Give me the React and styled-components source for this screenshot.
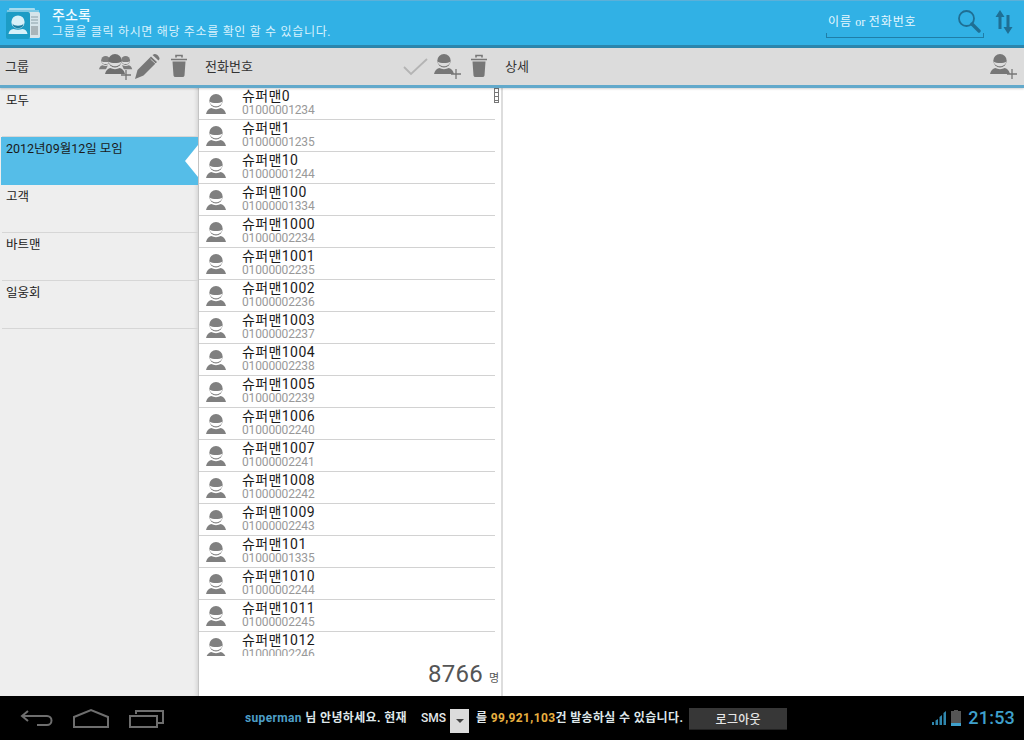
import React from 'react';
import styled, { createGlobalStyle } from 'styled-components';

const Global = createGlobalStyle`
  html, body { margin: 0; padding: 0; background: #fff; }
  body { font-family: Roboto, "Noto Sans CJK KR", sans-serif; }
  * { box-sizing: border-box; }
`;

const Screen = styled.div`
  width: 1024px; height: 740px; display: flex; flex-direction: column; overflow: hidden;
`;
const Header = styled.header`
  height: 48px; flex: none; display: flex; align-items: center;
  background: #31b1e5; border-top: 1px solid #5cb0d8; border-bottom: 3px solid #2b86ad;
  padding-left: 6px; color: #fff;
`;
const AppIcon = styled.svg`width: 34px; height: 31px; flex: none; margin-right: 12px; margin-top: 1px;`;
const TitleBlock = styled.div`display: flex; flex-direction: column; flex: 1; margin-top: -1px;`;
const Title = styled.div`font-size: 14px; line-height: 18px; font-weight: 500; color: #f2fbff; letter-spacing: 0.1px;`;
const Subtitle = styled.div`font-size: 12px; line-height: 16px; color: #d8f2fd; letter-spacing: 0.68px;`;
const SearchBox = styled.div`
  width: 158px; height: 28px; margin-top: 1px; display: flex; align-items: center; justify-content: space-between;
  border-bottom: 1px solid #1f7ea8; position: relative; flex: none; padding: 0 3px 0 2px;
  &::before, &::after { content: ''; position: absolute; bottom: 0; width: 1px; height: 4px; background: #1f7ea8; }
  &::before { left: 0; }
  &::after { right: 0; }
`;
const SearchText = styled.span`
  font-size: 12px; line-height: 16px; color: #e6f8ff; white-space: nowrap; margin-top: -4px;
  font-family: "Noto Sans CJK KR", sans-serif; letter-spacing: 0.85px;
`;
const SearchOr = styled.span`font-family: "Liberation Serif", serif; font-size: 12px; letter-spacing: 0;`;
const SearchIcon = styled.svg`width: 24px; height: 24px; flex: none; margin-top: -4px;`;
const SortIcon = styled.svg`width: 18px; height: 26px; flex: none; margin: -2px 11px 0 11px;`;

const Toolbar = styled.div`
  height: 40px; flex: none; display: flex; align-items: stretch; background: #dcdcdc;
  border-bottom: 3px solid #62a9cb; box-shadow: 0 1px 2px rgba(0,0,0,.18); position: relative; z-index: 2;
`;
const ToolSection = styled.div`
  width: ${p => p.$w}px; flex: ${p => p.$grow ? 1 : 'none'}; display: flex; align-items: center;
  padding-left: ${p => p.$pad}px; padding-right: ${p => p.$end}px;
`;
const ToolLabel = styled.span`font-size: 13px; line-height: 16px; color: #333; flex: 1;`;
const ToolIcon = styled.svg`flex: none; display: block; margin-left: ${p => p.$ml || 0}px;`;

const Body = styled.div`flex: 1; display: flex; min-height: 0;`;
const Groups = styled.nav`
  width: 198px; flex: none; background: #eeeeee; padding-top: 1px; box-shadow: inset -4px 0 4px -3px rgba(0,0,0,.13);
`;
const GroupRow = styled.div`
  height: 48px; padding: 3px 6px; font-size: 12.5px; line-height: 18px; color: ${p => p.$sel ? '#1a1a1a' : '#222'};
  background: ${p => p.$sel ? '#55bde8' : 'transparent'}; position: relative;
  border-bottom: 1px solid ${p => p.$sel ? 'transparent' : '#d6d6d6'};
  margin-left: ${p => p.$sel ? 1 : 2}px;
  padding-left: ${p => p.$sel ? 5 : 4}px;
`;
const GroupArrow = styled.span`
  position: absolute; right: 0; top: 8px; width: 0; height: 0;
  border-top: 16px solid transparent; border-bottom: 16px solid transparent; border-right: 13px solid #fff;
`;
const ListPane = styled.section`
  width: 305px; flex: none; background: #fff; border-left: 1px solid #c4c4c4; border-right: 2px solid #dddddd;
  display: flex; flex-direction: column; position: relative;
`;
const ListScroll = styled.div`height: 568px; overflow: hidden; flex: none;`;
const ContactRow = styled.div`
  height: 32px; display: flex; width: 296px; border-bottom: 1px solid #d2d2d2;
`;
const Avatar = styled.svg`width: 20px; height: 20px; margin: 6px 0 0 7px; flex: none;`;
const ContactText = styled.div`margin-left: 16px; display: flex; flex-direction: column;`;
const Name = styled.div`font-size: 14px; line-height: 15px; color: #1a1a1a; margin-top: 1px; white-space: nowrap; letter-spacing: 0.4px;`;
const Phone = styled.div`font-size: 12px; line-height: 13px; color: #999; white-space: nowrap; letter-spacing: -0.15px;`;
const Grip = styled.div`
  position: absolute; top: 0; right: 2px; width: 5px; height: 15px; border: 1px solid #777; background:
  repeating-linear-gradient(#fff 0 3px, #777 3px 4px);
`;
const Count = styled.div`
  flex: 1; display: flex; justify-content: flex-end; align-items: baseline; padding: 4px 2px 0 0; color: #555;
`;
const CountNum = styled.span`font-size: 24px; line-height: 28px; letter-spacing: 0.2px;`;
const CountUnit = styled.span`font-size: 11px; margin-left: 6px;`;
const Detail = styled.section`flex: 1; background: #fff;`;

const NavBar = styled.footer`
  height: 44px; flex: none; background: #000; display: flex; align-items: center; color: #dfe7ea;
`;
const NavIcons = styled.div`display: flex; align-items: center; gap: 19px; width: 245px; padding-left: 20px; flex: none; margin-top: -1px;`;
const Msg = styled.span`font-size: 12px; font-weight: 700; white-space: nowrap; line-height: 16px; letter-spacing: 0.36px;`;
const User = styled.span`color: #4d9fc7;`;
const SmsLabel = styled.span`font-size: 12px; font-weight: 500; margin-left: 14px; color: #e4e8ea; line-height: 16px;`;
const Select = styled.span`
  width: 19px; height: 24px; background: #dcdcdc; margin: 5px 7px 0 4px; display: flex; align-items: center; justify-content: center; flex: none;
  &::after { content: ''; border-left: 4px solid transparent; border-right: 4px solid transparent; border-top: 4px solid #444; }
`;
const Amount = styled.span`color: #e8b040;`;
const Logout = styled.button`
  width: 98px; height: 22px; margin: 1px 0 0 6px; background: #373737; border: 0; border-bottom: 1px solid #222; color: #e6e6e6;
  font: 500 12px "Noto Sans CJK KR", sans-serif; padding: 0; letter-spacing: 0.3px;
`;
const Status = styled.div`margin-left: auto; display: flex; align-items: center; margin-right: 9px; gap: 4px;`;
const Clock = styled.span`font-size: 18px; font-weight: 500; color: #3fa0cc; margin-left: 3px; line-height: 20px; letter-spacing: 0.2px;`;

const Person = ({ bg = '#fff', fill = '#808080' }) => (
  <g>
    <circle cx="10" cy="6.800" r="6.700" fill={fill} />
    <path d="M3.700 7.800C6 9.500 14 9.500 16.300 7.800 15.800 10.600 13 12.300 10 12.300S4.200 10.600 3.700 7.800z" fill={bg} />
    <path d="M5.200 14c3 1.500 6.600 1.500 9.600 0 2.600.8 4.400 2.700 5.200 6H0c.8-3.300 2.600-5.200 5.200-6z" fill={fill} />
  </g>
);
const Plus = ({ x, y, s = 5 }) => (
  <path d={`M${x - s} ${y}h${s * 2}M${x} ${y - s}v${s * 2}`} stroke="#777" strokeWidth="1.3" fill="none" />
);
const PersonAdd = ({ ml }) => (
  <ToolIcon $ml={ml} width="28" height="26" viewBox="0 0 28 26">
    <Person bg="#dcdcdc" fill="#777" />
    <Plus x={22} y={20} />
  </ToolIcon>
);
const Trash = ({ ml }) => (
  <ToolIcon $ml={ml} width="18" height="26" viewBox="0 0 18 26">
    <path d="M6 3.500V1.500h6v2M1 5.500h16" stroke="#777" strokeWidth="1.600" fill="none" />
    <path d="M2.500 7.500h13l-1 14a2 2 0 0 1-2 1.500h-7a2 2 0 0 1-2-1.500z" fill="#777" />
  </ToolIcon>
);
const Pencil = ({ ml }) => (
  <ToolIcon $ml={ml} width="26" height="27" viewBox="0 0 26 27">
    <path d="M1 26l2.500-9L17 3.500l6 5.500L9.500 22.500z" fill="#777" />
    <path d="M18.500 2l6 5.500 1-1.500c.4-2-3-5.600-5-5z" fill="#777" />
    <path d="M16.500 6l5.500 5M19 4.500l3.500 3" stroke="#dcdcdc" strokeWidth=".8" />
  </ToolIcon>
);
const GroupAdd = ({ ml }) => (
  <ToolIcon $ml={ml} width="34" height="28" viewBox="0 0 34 28">
    <g transform="translate(0 3) scale(.66)"><Person bg="#dcdcdc" fill="#7d7d7d" /></g>
    <g transform="translate(20 3) scale(.66)"><Person bg="#dcdcdc" fill="#7d7d7d" /></g>
    <path d="M4.500 21.500L9 12h14l4 9.500z" fill="#dcdcdc" />
    <g transform="translate(6 1)"><Person bg="#dcdcdc" fill="#6f6f6f" /></g>
    <Plus x={27} y={22} />
  </ToolIcon>
);
const Check = ({ ml }) => (
  <ToolIcon $ml={ml} width="25" height="18" viewBox="0 0 25 18">
    <path d="M1 9l7 7L24 1" stroke="#b4b4b4" strokeWidth="1.800" fill="none" />
  </ToolIcon>
);

const contacts = [
  ['슈퍼맨0','01000001234'],['슈퍼맨1','01000001235'],['슈퍼맨10','01000001244'],['슈퍼맨100','01000001334'],
  ['슈퍼맨1000','01000002234'],['슈퍼맨1001','01000002235'],['슈퍼맨1002','01000002236'],['슈퍼맨1003','01000002237'],
  ['슈퍼맨1004','01000002238'],['슈퍼맨1005','01000002239'],['슈퍼맨1006','01000002240'],['슈퍼맨1007','01000002241'],
  ['슈퍼맨1008','01000002242'],['슈퍼맨1009','01000002243'],['슈퍼맨101','01000001335'],['슈퍼맨1010','01000002244'],
  ['슈퍼맨1011','01000002245'],['슈퍼맨1012','01000002246'],
];

export default function App() {
  return (
    <Screen>
      <Global />
      <Header>
        <AppIcon viewBox="0 0 34 31">
          <rect x="3" y="0" width="26" height="4" rx="1" fill="#a8dcef" />
          <rect x="1" y="2" width="32" height="3" fill="#7cc8e4" />
          <rect x="22" y="4" width="12" height="26" rx="1.500" fill="#d5e4ea" />
          <rect x="0" y="4" width="24" height="27" rx="2" fill="#1c9cc5" />
          <circle cx="12" cy="14" r="6.600" fill="#d8f1f9" />
          <path d="M6.400 15.500c1.600 3 9.600 3 11.200 0l-1 3a7 7 0 0 1-9.200 0z" fill="#1c7fa3" />
          <path d="M7.500 21c3 1 6 1 9 0 3 .6 4.500 2 5 5H2.500c.5-3 2-4.400 5-5z" fill="#d8f1f9" />
          <path d="M25 9h7M25 12h7M25 15h7" stroke="#8ba0a8" strokeWidth="1" />
          <rect x="25" y="18" width="7" height="9" fill="#a9b5ba" />
        </AppIcon>
        <TitleBlock>
          <Title>주소록</Title>
          <Subtitle>그룹을 클릭 하시면 해당 주소를 확인 할 수 있습니다.</Subtitle>
        </TitleBlock>
        <SearchBox>
          <SearchText>이름 <SearchOr>or</SearchOr> 전화번호</SearchText>
          <SearchIcon viewBox="0 0 24 24">
            <circle cx="9.500" cy="9.500" r="7.500" fill="none" stroke="#1f6f94" strokeWidth="1.800" />
            <path d="M15 15l7 7" stroke="#1f6f94" strokeWidth="3.400" strokeLinecap="round" />
          </SearchIcon>
        </SearchBox>
        <SortIcon viewBox="0 0 18 26">
          <path d="M5 1L.5 8h3v12h3V8h3zM13 25l4.500-7h-3V6h-3v12h-3z" fill="#1f6f94" />
        </SortIcon>
      </Header>
      <Toolbar>
        <ToolSection $w={205} $pad={5} $end={17}>
          <ToolLabel>그룹</ToolLabel>
          <GroupAdd />
          <Pencil ml={1} />
          <Trash ml={10} />
        </ToolSection>
        <ToolSection $w={300} $pad={0} $end={17}>
          <ToolLabel>전화번호</ToolLabel>
          <Check />
          <PersonAdd ml={6} />
          <Trash ml={8} />
        </ToolSection>
        <ToolSection $grow $pad={0} $end={6}>
          <ToolLabel>상세</ToolLabel>
          <PersonAdd />
        </ToolSection>
      </Toolbar>
      <Body>
        <Groups>
          <GroupRow>모두</GroupRow>
          <GroupRow $sel>2012년09월12일 모임<GroupArrow /></GroupRow>
          <GroupRow>고객</GroupRow>
          <GroupRow>바트맨</GroupRow>
          <GroupRow>일웅회</GroupRow>
        </Groups>
        <ListPane>
          <Grip />
          <ListScroll>
            {contacts.map(([n, p]) => (
              <ContactRow key={n}>
                <Avatar viewBox="0 0 20 20"><Person /></Avatar>
                <ContactText><Name>{n}</Name><Phone>{p}</Phone></ContactText>
              </ContactRow>
            ))}
          </ListScroll>
          <Count><CountNum>8766</CountNum><CountUnit>명</CountUnit></Count>
        </ListPane>
        <Detail />
      </Body>
      <NavBar>
        <NavIcons>
          <svg width="34" height="20" viewBox="0 0 34 20" fill="none" stroke="#6e6e6e" strokeWidth="2">
            <path d="M8 3L2 8l6 5M2 8h25a4.500 4.500 0 0 1 0 9H17" />
          </svg>
          <svg width="37" height="20" viewBox="0 0 37 20" fill="none" stroke="#6e6e6e" strokeWidth="2">
            <path d="M1 19V9L18 2l17 7v10z" />
          </svg>
          <svg width="35" height="20" viewBox="0 0 35 20" fill="none" stroke="#6e6e6e" strokeWidth="2">
            <path d="M1 8h27v11H1zM7 6V3h27v12h-5" />
          </svg>
        </NavIcons>
        <Msg><User>superman</User> 님 안녕하세요. 현재</Msg>
        <SmsLabel>SMS</SmsLabel>
        <Select />
        <Msg>를 <Amount>99,921,103</Amount>건 발송하실 수 있습니다.</Msg>
        <Logout>로그아웃</Logout>
        <Status>
          <svg width="15" height="14" viewBox="0 0 15 14" fill="#2f86ad">
            <path d="M0 14h2v-3H0zM3.500 14H6V8L3.500 9.500zM7.500 14H10V4L7.500 6zM11.500 14H14V0l-2.500 2z" />
          </svg>
          <svg width="10" height="16" viewBox="0 0 10 16">
            <rect x="3" y="0" width="4" height="2" fill="#555" />
            <rect x="0" y="1" width="10" height="15" fill="#555" />
            <rect x="0" y="13" width="10" height="3" fill="#3fa0cc" />
          </svg>
          <Clock>21:53</Clock>
        </Status>
      </NavBar>
    </Screen>
  );
}
